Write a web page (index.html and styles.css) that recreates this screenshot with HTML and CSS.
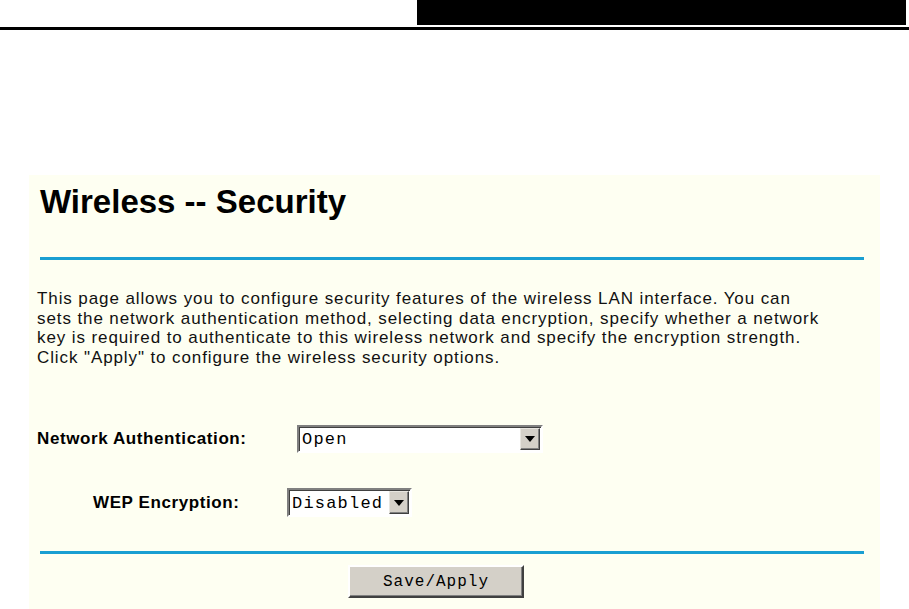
FILE: index.html
```html
<!DOCTYPE html>
<html>
<head>
  <link rel="stylesheet" href="styles.css">
  <title>Wireless -- Security</title>
</head>
<body>
  <div class="header">
    <div class="header-block"></div>
  </div>

  <div class="panel">
    <h1 class="title">Wireless -- Security</h1>
    <div class="rule rule-top"></div>

    <p class="intro">This page allows you to configure security features of the wireless LAN interface. You can<br>
    sets the network authentication method, selecting data encryption, specify whether a network<br>
    key is required to authenticate to this wireless network and specify the encryption strength.<br>
    Click "Apply" to configure the wireless security options.</p>

    <div class="row row-auth">
      <label class="label" for="auth">Network Authentication:</label>
      <span class="combo combo-auth">
        <select class="combo-field" id="auth">
          <option>Open</option>
          <option>Shared</option>
          <option>WPA-PSK</option>
        </select>
        <span class="combo-arrow"></span>
      </span>
    </div>

    <div class="row row-wep">
      <label class="label" for="wep">WEP Encryption:</label>
      <span class="combo combo-wep">
        <select class="combo-field" id="wep">
          <option>Disabled</option>
          <option>Enabled</option>
        </select>
        <span class="combo-arrow"></span>
      </span>
    </div>

    <div class="rule rule-bottom"></div>

    <input type="button" class="apply" value="Save/Apply">
  </div>
</body>
</html>
```

FILE: styles.css
```css
body {
  margin: 0;
  background: #fff;
  font-family: "Liberation Sans", Arial, sans-serif;
  color: #000;
}

.header {
  display: flex;
  justify-content: flex-end;
  padding: 0 3px 2px 0;
  height: 25px;
  border-bottom: 3px solid #000;
}
.header-block {
  width: 489px;
  background: #000;
}

.panel {
  margin: 145px 0 0 29px;
  width: 851px;
  height: 434px;
  background: #fefff2;
  overflow: hidden;
}

.title {
  margin: 7px 0 0 11px;
  font-size: 33px;
  line-height: 40px;
  font-weight: bold;
}

.rule {
  margin-left: 11px;
  width: 824px;
  height: 3px;
  background: #1a9fd2;
}
.rule-top {
  margin-top: 35px;
}
.rule-bottom {
  margin-top: 34px;
}

.intro {
  margin: 29px 0 0 8px;
  font-size: 17px;
  letter-spacing: 0.9px;
  line-height: 19.6px;
  color: #111;
}

.row {
  display: flex;
  align-items: center;
}
.row-auth {
  margin-top: 58px;
  padding-left: 8px;
}
.row-wep {
  margin-top: 35px;
  padding-left: 64px;
}
.label {
  font-weight: bold;
  font-size: 17px;
  letter-spacing: 0.6px;
}
.row-auth .label {
  width: 260px;
}
.row-wep .label {
  width: 194px;
}

.combo {
  display: inline-flex;
  box-sizing: border-box;
  border: 2px solid;
  border-color: #808080 #fff #fff #808080;
  box-shadow: inset 1px 1px 0 #404040;
  background: #fff;
}
.combo-auth {
  width: 246px;
  height: 28px;
}
.combo-wep {
  width: 125px;
  height: 29px;
}
.combo-field {
  flex: 1;
  min-width: 0;
  appearance: none;
  -webkit-appearance: none;
  border: none;
  outline: none;
  background: transparent;
  padding: 0 0 0 2px;
  margin: 1px 0 0 1px;
  font-family: "Liberation Mono", "Courier New", monospace;
  font-size: 17px;
  letter-spacing: 1.2px;
  color: #000;
}
.combo-arrow {
  position: relative;
  width: 20px;
  margin: 1px 1px 1px 0;
  box-sizing: border-box;
  background: #d4d0c8;
  border: 1px solid;
  border-color: #e8e6e0 #404040 #404040 #e8e6e0;
  box-shadow: inset -1px -1px 0 #808080;
}
.combo-arrow::after {
  content: "";
  position: absolute;
  left: 4px;
  top: 50%;
  margin-top: -3px;
  border-left: 5px solid transparent;
  border-right: 5px solid transparent;
  border-top: 6px solid #000;
}

.apply {
  display: block;
  margin: 11px 0 0 319px;
  width: 176px;
  height: 33px;
  background: #d4d0c8;
  border: 2px solid;
  border-color: #fff #404040 #404040 #fff;
  box-shadow: inset -1px -1px 0 #808080;
  font-family: "Liberation Mono", "Courier New", monospace;
  font-size: 16px;
  letter-spacing: 1px;
  color: #000;
}
```
